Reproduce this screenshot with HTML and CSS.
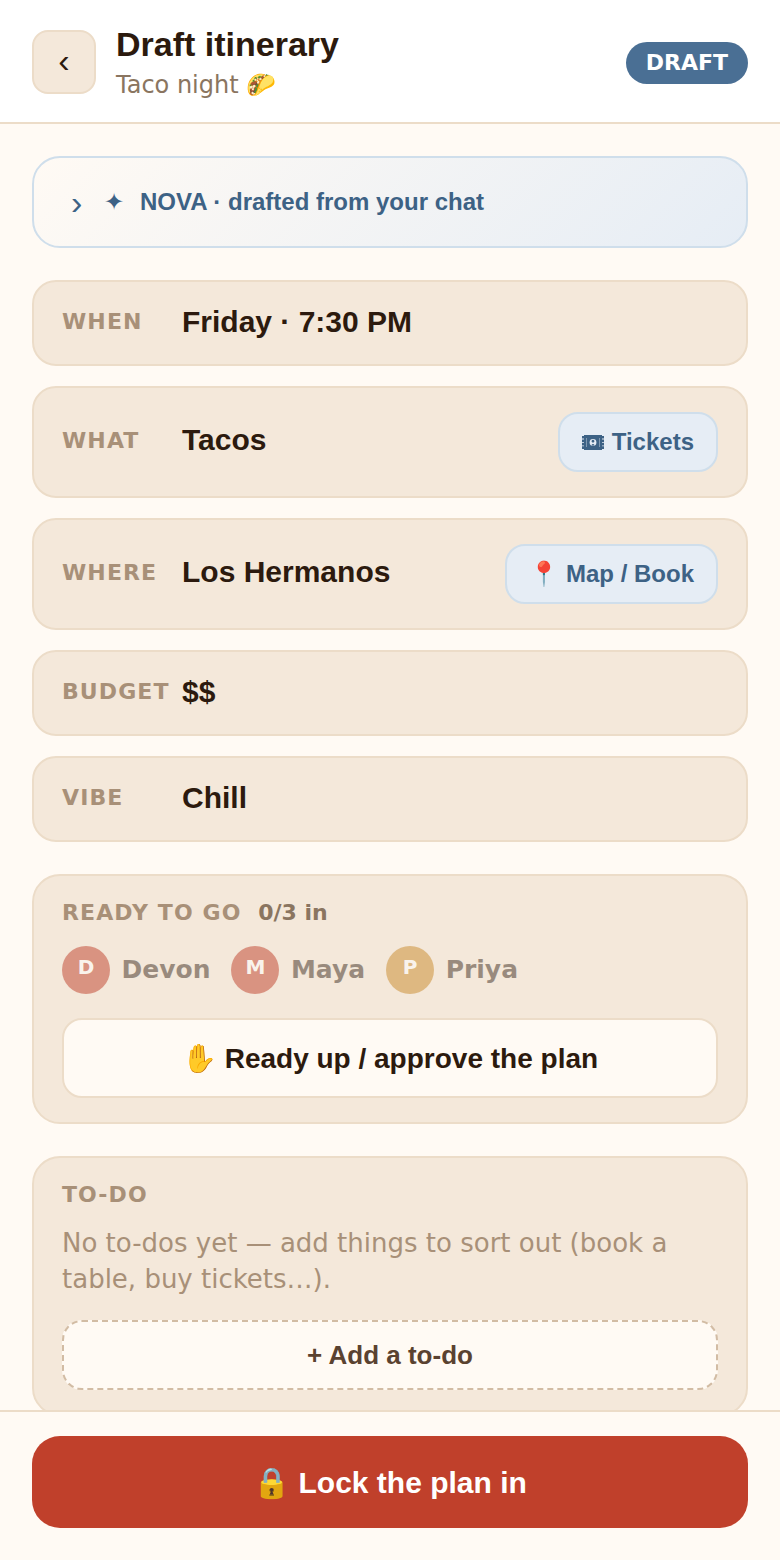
FILE: index.html
```html
<!DOCTYPE html>
<html lang="en">

<head>
    <meta charset="UTF-8">
    <meta name="viewport" content="width=device-width, initial-scale=1.0">
    <title>Draft itinerary</title>
    <link rel="stylesheet" href="styles.css">
</head>

<body>
    <div class="screen">
        <header class="topbar">
            <button class="back-btn">‹</button>
            <div class="title-wrap">
                <h1 class="title">Draft itinerary</h1>
                <p class="subtitle">Taco night 🌮</p>
            </div>
            <span class="status-pill">DRAFT</span>
        </header>

        <main class="content">
            <div class="nova-card">
                <span class="nova-chevron">›</span>
                <span class="nova-star">✦</span>
                <span class="nova-text">NOVA · drafted from your chat</span>
            </div>

            <div class="rows">
                <div class="row">
                    <span class="row-label">WHEN</span>
                    <span class="row-value">Friday · 7:30 PM</span>
                </div>
                <div class="row">
                    <span class="row-label">WHAT</span>
                    <span class="row-value">Tacos</span>
                    <button class="link-btn">
                        <svg class="ticket-icon" width="22" height="15" viewBox="0 0 22 15">
                            <rect x="2" y="0" width="18" height="15" fill="currentColor"/>
                            <path d="M0 1h3v2.6H0zM0 4.4h3V7H0zM0 7.8h3v2.6H0zM0 11.2h3V14H0zM19 1h3v2.6h-3zM19 4.4h3V7h-3zM19 7.8h3v2.6h-3zM19 11.2h3V14h-3z" fill="currentColor"/>
                            <path d="M4.5 3v9M17.5 3v9" stroke="#e6edf5" stroke-width="0.8" opacity="0.5"/>
                            <circle cx="11" cy="7.4" r="3.4" fill="#e6edf5"/>
                            <path d="M9.4 10.4a1.8 2.6 0 0 1 3.2 0zM11 4.8a1.4 1.4 0 1 1-0.01 0z" fill="currentColor"/>
                        </svg>
                        Tickets
                    </button>
                </div>
                <div class="row">
                    <span class="row-label">WHERE</span>
                    <span class="row-value">Los Hermanos</span>
                    <button class="link-btn">📍 Map / Book</button>
                </div>
                <div class="row">
                    <span class="row-label">BUDGET</span>
                    <span class="row-value">$$</span>
                </div>
                <div class="row">
                    <span class="row-label">VIBE</span>
                    <span class="row-value">Chill</span>
                </div>
            </div>

            <section class="panel ready-panel">
                <h2 class="panel-title">READY TO GO <span class="count">0/3 in</span></h2>
                <div class="people">
                    <div class="person">
                        <span class="avatar avatar-red">D</span>
                        <span class="person-name">Devon</span>
                    </div>
                    <div class="person">
                        <span class="avatar avatar-red">M</span>
                        <span class="person-name">Maya</span>
                    </div>
                    <div class="person">
                        <span class="avatar avatar-sand">P</span>
                        <span class="person-name">Priya</span>
                    </div>
                </div>
                <button class="ready-btn">✋ Ready up / approve the plan</button>
            </section>

            <section class="panel todo-panel">
                <h2 class="panel-title">TO-DO</h2>
                <p class="todo-empty">No to-dos yet — add things to sort out (book a table, buy tickets…).</p>
                <button class="add-btn">+ Add a to-do</button>
            </section>
        </main>

        <footer class="footer">
            <button class="lock-btn">🔒 Lock the plan in</button>
        </footer>
    </div>
</body>

</html>
```

FILE: styles.css
```css
* {
    margin: 0;
    padding: 0;
    box-sizing: border-box;
}

body {
    background-color: #fffaf4;
    color: #2c1a0e;
    font-family: 'DejaVu Sans', sans-serif;
}

button {
    font-family: 'Liberation Sans', sans-serif;
    font-weight: bold;
    cursor: pointer;
}

.screen {
    height: 1560px;
    display: flex;
    flex-direction: column;
    overflow: hidden;
}

.topbar {
    flex: none;
    height: 124px;
    display: flex;
    align-items: center;
    gap: 20px;
    padding: 2px 32px 0;
    background-color: #fff;
    border-bottom: 2px solid #ecdcc8;
}

.back-btn {
    width: 64px;
    height: 64px;
    padding-bottom: 3px;
    font-size: 34px;
    font-weight: normal;
    color: #2c1a0e;
    background-color: #f4e8da;
    border: 2px solid #ecdcc8;
    border-radius: 16px;
}

.title-wrap {
    flex: 1;
    padding-bottom: 1px;
}

.title {
    font-family: 'Liberation Sans', sans-serif;
    font-size: 34px;
    line-height: 44px;
    font-weight: bold;
}

.subtitle {
    margin-top: 3px;
    font-size: 24px;
    line-height: 32px;
    color: #8a7560;
}

.status-pill {
    margin-top: 2px;
    padding: 6px 20px;
    font-size: 22px;
    line-height: 30px;
    font-weight: bold;
    color: #fff;
    background-color: #4a6f94;
    border-radius: 21px;
}

.content {
    flex: 1;
    min-height: 0;
    padding: 32px 32px 0;
    overflow: hidden;
}

.nova-card {
    height: 92px;
    display: flex;
    align-items: center;
    padding: 0 34px;
    color: #3d6285;
    background: linear-gradient(135deg, #fffaf4, #e6edf5);
    border: 2px solid #cfdeeb;
    border-radius: 28px;
}

.nova-chevron {
    width: 36px;
    padding-left: 3px;
    font-family: 'Liberation Sans', sans-serif;
    font-size: 34px;
    line-height: 36px;
}

.nova-star {
    width: 36px;
    font-size: 24px;
    font-weight: bold;
}

.nova-text {
    font-family: 'Liberation Sans', sans-serif;
    font-size: 24px;
    font-weight: bold;
}

.rows {
    display: flex;
    flex-direction: column;
    gap: 20px;
    margin-top: 32px;
}

.row {
    display: flex;
    align-items: baseline;
    min-height: 86px;
    padding: 24px 28px;
    background-color: #f4e8da;
    border: 2px solid #ecdcc8;
    border-radius: 24px;
}

.row-label {
    flex: none;
    align-self: center;
    width: 120px;
    margin-bottom: 3px;
    font-size: 22px;
    font-weight: bold;
    letter-spacing: 1.1px;
    white-space: nowrap;
    color: #a89078;
}

.row-value {
    font-family: 'Liberation Sans', sans-serif;
    font-size: 30px;
    line-height: 32px;
    font-weight: bold;
}

.link-btn {
    display: flex;
    align-items: center;
    gap: 8px;
    margin-left: auto;
    height: 60px;
    padding: 0 22px;
    font-size: 24px;
    color: #3d6285;
    background-color: #e6edf5;
    border: 2px solid #cfdeeb;
    border-radius: 20px;
}

.ticket-icon {
    flex: none;
}

.panel {
    margin-top: 32px;
    padding: 22px 28px 24px;
    background-color: #f4e8da;
    border: 2px solid #ecdcc8;
    border-radius: 28px;
}

.panel-title {
    font-size: 22px;
    line-height: 30px;
    font-weight: bold;
    letter-spacing: 1.1px;
    color: #a89078;
}

.count {
    margin-left: 8px;
    letter-spacing: 0;
    color: #8a7560;
}

.people {
    display: flex;
    gap: 21px;
    margin-top: 18px;
}

.person {
    display: flex;
    align-items: center;
    gap: 11.5px;
}

.avatar {
    width: 48px;
    height: 48px;
    padding-bottom: 6px;
    display: flex;
    align-items: center;
    justify-content: center;
    font-size: 20px;
    font-weight: bold;
    color: #fff;
    border-radius: 50%;
    opacity: 0.5;
}

.avatar-red {
    background-color: #c0402b;
}

.avatar-sand {
    background-color: #c98a2b;
}

.person-name {
    padding-bottom: 2px;
    font-size: 25px;
    font-weight: bold;
    color: #2c1a0e;
    opacity: 0.45;
}

.ready-btn {
    width: 100%;
    height: 80px;
    margin-top: 24px;
    font-size: 28px;
    color: #2c1a0e;
    background-color: #fffaf4;
    border: 2px solid #ecdcc8;
    border-radius: 20px;
}

.todo-empty {
    margin-top: 15px;
    font-size: 26px;
    line-height: 36px;
    color: #a89078;
}

.add-btn {
    width: 100%;
    height: 70px;
    margin-top: 23px;
    font-size: 26px;
    color: #5a4230;
    background-color: #fffaf4;
    border: 2px dashed #d2bca4;
    border-radius: 20px;
}

.footer {
    flex: none;
    height: 150px;
    padding: 24px 32px 0;
    background-color: #fffaf4;
    border-top: 2px solid #ecdcc8;
}

.lock-btn {
    width: 100%;
    height: 92px;
    font-size: 30px;
    color: #fff;
    background-color: #c0402b;
    border: none;
    border-radius: 28px;
}
```
